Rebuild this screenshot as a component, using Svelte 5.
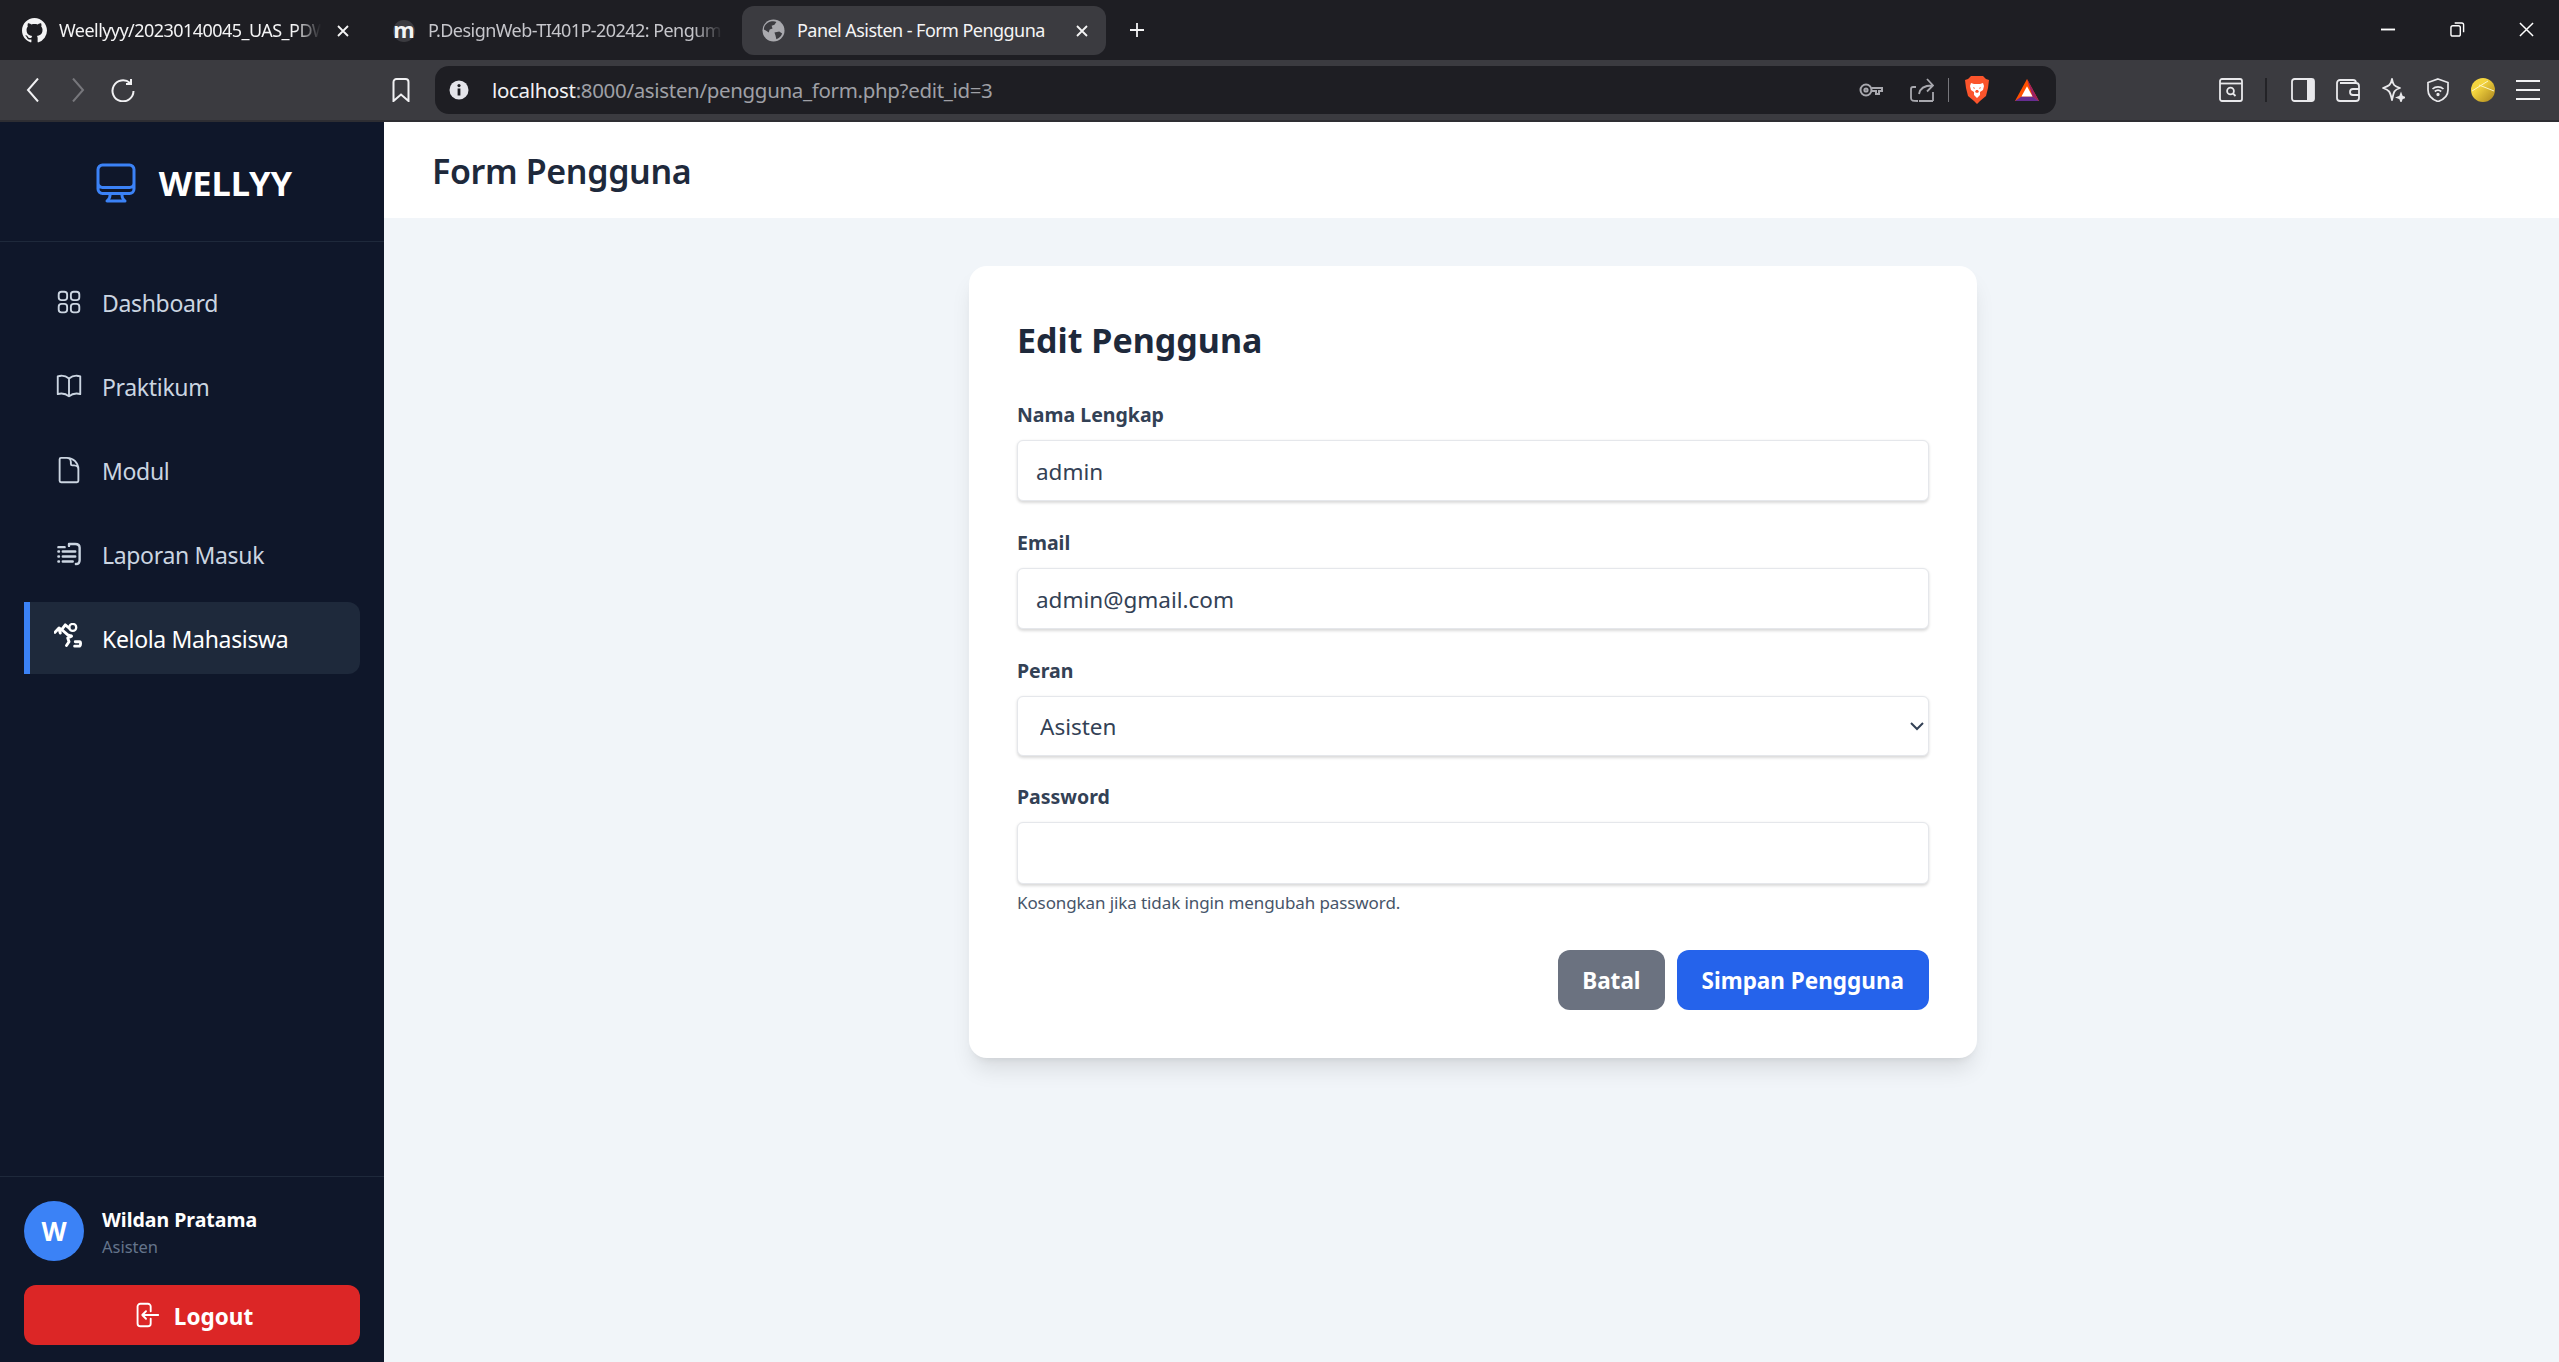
<script>
  const nav = [
    { label: 'Dashboard', icon: 'grid' },
    { label: 'Praktikum', icon: 'book' },
    { label: 'Modul', icon: 'doc' },
    { label: 'Laporan Masuk', icon: 'list' },
    { label: 'Kelola Mahasiswa', icon: 'users', active: true },
  ];
</script>

<div class="page">
  <div class="tabs">
    <div class="tab t1">
      <svg class="fav" viewBox="0 0 16 16" fill="#f4f4f5"><path d="M8 0C3.58 0 0 3.58 0 8c0 3.54 2.29 6.53 5.47 7.59.4.07.55-.17.55-.38 0-.19-.01-.82-.01-1.49-2.01.37-2.53-.49-2.69-.94-.09-.23-.48-.94-.82-1.13-.28-.15-.68-.52-.01-.53.63-.01 1.08.58 1.23.82.72 1.21 1.87.87 2.33.66.07-.52.28-.87.51-1.07-1.78-.2-3.64-.89-3.64-3.95 0-.87.31-1.59.82-2.15-.08-.2-.36-1.02.08-2.12 0 0 .67-.21 2.2.82.64-.18 1.32-.27 2-.27.68 0 1.36.09 2 .27 1.53-1.04 2.2-.82 2.2-.82.44 1.1.16 1.92.08 2.12.51.56.82 1.27.82 2.15 0 3.07-1.87 3.75-3.65 3.95.29.25.54.73.54 1.48 0 1.07-.01 1.93-.01 2.2 0 .21.15.46.55.38A8.013 8.013 0 0016 8c0-4.42-3.58-8-8-8z"/></svg>
      <span class="ttl w1">Weellyyy/20230140045_UAS_PDW</span>
      <svg class="x" viewBox="0 0 12 12" stroke="#f4f4f5" stroke-width="1.8"><path d="M1 1l10 10M11 1L1 11"/></svg>
    </div>
    <div class="tab t2">
      <span class="moodle">m</span>
      <span class="ttl w2 dim">P.DesignWeb-TI401P-20242: Pengum</span>
    </div>
    <div class="tab t3">
      <svg class="fav globe" viewBox="0 0 24 24"><circle cx="12" cy="12" r="11.5" fill="#a9a9ae"/><path d="M6 4c3-2 7-2 9-1l-2 3-3 1 1 3-3 1-1 3-3-2-2-1c0-3 1-5 4-7zM13 14l5-1 3 2c-1 3-3 5-6 6l-1-4z" fill="#3b3b40"/></svg>
      <span class="ttl w3">Panel Asisten - Form Pengguna</span>
      <svg class="x" viewBox="0 0 12 12" stroke="#f4f4f5" stroke-width="1.8"><path d="M1 1l10 10M11 1L1 11"/></svg>
    </div>
    <svg class="plus" viewBox="0 0 16 16" stroke="#f4f4f5" stroke-width="1.8"><path d="M8 1v14M1 8h14"/></svg>
    <div class="win">
      <svg viewBox="0 0 16 16" stroke="#fff" stroke-width="2"><path d="M0 8h15"/></svg>
      <svg viewBox="0 0 16 16" fill="none" stroke="#fff" stroke-width="1.5"><rect x="1" y="4" width="10" height="11" rx="2"/><path d="M5 1h7.5a2 2 0 012 2v8"/></svg>
      <svg viewBox="0 0 16 16" stroke="#fff" stroke-width="1.6"><path d="M1 1l14 14M15 1L1 15"/></svg>
    </div>
  </div>

  <div class="toolbar">
    <svg class="ti back" viewBox="0 0 24 24" fill="none" stroke="#f1f1f3" stroke-width="2"><path d="M17 0.5L7 12l10 11.5"/></svg>
    <svg class="ti fwd" viewBox="0 0 24 24" fill="none" stroke="#77777c" stroke-width="2"><path d="M7 0.5L17 12 7 23.5"/></svg>
    <svg class="ti reload" viewBox="0 0 24 24" fill="none" stroke="#f1f1f3" stroke-width="2"><path d="M19 5A10.500 10.500 0 1 0 22.500 13"/><path d="M20 1v5h-5"/></svg>
    <svg class="ti mark" viewBox="0 0 24 24" fill="none" stroke="#f1f1f3" stroke-width="2"><path d="M4.500 23V4a3 3 0 013-3h9a3 3 0 013 3v19L12 16.500z"/></svg>

    <div class="addr">
      <svg class="ti" viewBox="0 0 24 24"><circle cx="12" cy="12" r="9.500" fill="#e5e5ea"/><rect x="10.600" y="10.500" width="2.800" height="7" fill="#1e1e23"/><circle cx="12" cy="7.600" r="1.600" fill="#1e1e23"/></svg>
      <div class="url"><span>localhost</span>:8000/asisten/pengguna_form.php?edit_id=3</div>
      <svg class="ti key" viewBox="0 0 24 14" fill="none" stroke="#a8a8ae" stroke-width="2"><circle cx="7" cy="7" r="5.500"/><circle cx="7" cy="7" r="1.600"/><path d="M12.500 5H23v3h-3v3h-3V8h-4.500"/></svg>
      <svg class="ti share" viewBox="0 0 24 24" fill="none" stroke="#a8a8ae" stroke-width="1.800"><path d="M8 23c-5 0-7 0-7-3V11c0-1 1-2 2-2h3M23 23H9M23 23v-9M9 16C10 10 14 7.500 22 7.500M17 1l6 6.500-6 6"/></svg>
      <div class="adiv"></div>
      <svg class="ti lion" viewBox="0 0 24 28"><path d="M6 0h12l3 3 3 1-1 8-2 8-6 5-3 3-3-3-6-5-2-8-1-8 3-1z" fill="#fb542b"/><path d="M6 7l3 1h6l3-1 1 3-1 4-3 2v3l-3 3-3-3v-3l-3-2-1-4z" fill="#fff"/><path d="M8 11l2 1-1 1zM16 11l-2 1 1 1zM11 14h2l1 2-2 1-2-1z" fill="#fb542b"/></svg>
      <svg class="ti bat" viewBox="0 0 26 24"><path d="M13 0l13 24H0z" fill="#ff5000"/><path d="M13 0l13 24-7-5z" fill="#9e1f63"/><path d="M0 24l7-5h12l7 5z" fill="#662d91"/><path d="M13 8l6 11H7z" fill="#fff"/></svg>
    </div>

    <div class="tright">
      <svg class="ti" viewBox="0 0 24 24" fill="none" stroke="#e9e9ec" stroke-width="1.800"><rect x="1" y="1" width="22" height="22" rx="2"/><path d="M1 5.500h22"/><circle cx="11.500" cy="13" r="3.400"/><path d="M14 15.500l2.500 2.500"/></svg>
      <div class="sep"></div>
      <svg class="ti" viewBox="0 0 24 24" fill="none" stroke="#e9e9ec" stroke-width="1.800"><rect x="1" y="1" width="22" height="22" rx="2.500"/><path d="M16 1h5a2 2 0 012 2v18a2 2 0 01-2 2h-5z" fill="#e9e9ec" stroke="none"/></svg>
      <svg class="ti" viewBox="0 0 24 24" fill="none" stroke="#e9e9ec" stroke-width="1.800"><path d="M1 5a3 3 0 013-3h13a3 3 0 013 3M1 5v15a3 3 0 003 3h16a3 3 0 003-3V8a3 3 0 00-3-3H4"/><path d="M23 11h-6a3 3 0 000 6h6"/></svg>
      <svg class="ti" viewBox="0 0 24 24" fill="none" stroke="#e9e9ec" stroke-width="1.800"><path d="M11 1c1 6 2 7 8 9-6 2-6 3-8 12C9 13 8 12 2 10 8 8 10 7 11 1z" stroke-linejoin="round"/><path d="M20 16l1 2.500 2.500 1-2.500 1-1 2.500-1-2.500-2.500-1 2.500-1z" fill="#e9e9ec"/></svg>
      <svg class="ti" viewBox="0 0 24 24" fill="none" stroke="#e9e9ec" stroke-width="1.700"><path d="M12 1l10 3.500V12c0 6-4 9.500-10 11.500C6 21.500 2 18 2 12V4.500z"/><path d="M6.500 11a8 8 0 0111 0M8.800 13.500a5 5 0 016.400 0"/><circle cx="12" cy="16.500" r="0.800" fill="#e9e9ec"/></svg>
      <svg class="ti" viewBox="0 0 24 24"><defs><linearGradient id="coin" x1="0" y1="0" x2="1" y2="1"><stop offset="0.350" stop-color="#f4d53f"/><stop offset="1" stop-color="#a8821c"/></linearGradient></defs><circle cx="12" cy="12" r="12" fill="url(#coin)"/><path d="M1 13L17 3M8 7l15 6" stroke="#fdf6c5" stroke-width="1" fill="none"/></svg>
      <svg class="ti" viewBox="0 0 24 24" stroke="#f1f1f3" stroke-width="2"><path d="M0 3h24M0 12h24M0 21h24"/></svg>
    </div>
  </div>

  <div class="app">
    <aside class="sidebar">
      <div class="brand">
        <svg class="logo" viewBox="0 0 24 24" fill="none" stroke="#3b82f6" stroke-width="1.500" stroke-linecap="round" stroke-linejoin="round"><path d="M9 17.250v1.007a3 3 0 01-.879 2.122L7.500 21h9l-.621-.621A3 3 0 0115 18.257V17.250m6-12V15a2.250 2.250 0 01-2.250 2.250H5.250A2.250 2.250 0 013 15V5.250m18 0A2.250 2.250 0 0018.750 3H5.250A2.250 2.250 0 003 5.250m18 0V12a2.250 2.250 0 01-2.250 2.250H5.250A2.250 2.250 0 013 12V5.250"/></svg>
        <span>WELLYY</span>
      </div>
      <nav>
        {#each nav as item}
          <div class="item" class:active={item.active}>
            <svg class="nicon" viewBox="0 0 24 24" fill="none" stroke="currentColor" stroke-width="1.500" stroke-linecap="round" stroke-linejoin="round">
              {#if item.icon === 'grid'}
                <path d="M3.750 6A2.250 2.250 0 016 3.750h2.250A2.250 2.250 0 0110.500 6v2.250a2.250 2.250 0 01-2.250 2.250H6a2.250 2.250 0 01-2.250-2.250V6zM3.750 15.750A2.250 2.250 0 016 13.500h2.250a2.250 2.250 0 012.250 2.250V18a2.250 2.250 0 01-2.250 2.250H6A2.250 2.250 0 013.750 18v-2.250zM13.500 6a2.250 2.250 0 012.250-2.250H18A2.250 2.250 0 0120.250 6v2.250A2.250 2.250 0 0118 10.500h-2.250a2.250 2.250 0 01-2.250-2.250V6zM13.500 15.750a2.250 2.250 0 012.250-2.250H18a2.250 2.250 0 012.250 2.250V18A2.250 2.250 0 0118 20.250h-2.250a2.250 2.250 0 01-2.250-2.250v-2.250z"/>
              {:else if item.icon === 'book'}
                <path d="M12 6.042A8.967 8.967 0 006 3.750c-1.052 0-2.062.18-3 .512v14.250A8.987 8.987 0 016 18c2.305 0 4.408.867 6 2.292m0-14.250a8.966 8.966 0 016-2.292c1.052 0 2.062.18 3 .512v14.250A8.987 8.987 0 0018 18a8.967 8.967 0 00-6 2.292m0-14.250v14.250"/>
              {:else if item.icon === 'doc'}
                <path d="M19.500 14.250v-2.625a3.375 3.375 0 00-3.375-3.375h-1.500A1.125 1.125 0 0113.500 7.125v-1.500a3.375 3.375 0 00-3.375-3.375H8.250m2.250 0H5.625c-.621 0-1.125.504-1.125 1.125v17.250c0 .621.504 1.125 1.125 1.125h12.750c.621 0 1.125-.504 1.125-1.125V11.250a9 9 0 00-9-9z"/>
              {:else if item.icon === 'list'}
                <path d="M3.500 6.500h5M12 5.500V4h5c2 0 3.500 1 3.500 3v10c0 2-1 3-3 3M7 10h10M3.500 10h.5M7 14h10M3.500 14h.5M7 18h8M3.500 18h.5" stroke-width="1.900"/>
              {:else}
                <g stroke-width="2.300">
                  <path d="M.8 7.500L4 4l2 1.500L9 1.500l3 2.500M4 4.500l1 3.500M7 6l4 3.500 3 1M14 10.500l-3 1.500 1 3-2 3M17 15h3.500c1 0 1 3 0 3.500h-4"/>
                  <circle cx="15" cy="3.500" r="2.800" stroke-width="1.800"/>
                </g>
              {/if}
            </svg>
            <span>{item.label}</span>
          </div>
        {/each}
      </nav>
      <div class="foot">
        <div class="user">
          <div class="avatar">W</div>
          <div class="who">
            <div class="name">Wildan Pratama</div>
            <div class="role">Asisten</div>
          </div>
        </div>
        <button class="logout" type="button">
          <svg viewBox="0 0 24 24" fill="none" stroke="currentColor" stroke-width="1.500" stroke-linecap="round" stroke-linejoin="round"><path d="M15.750 9V5.250A2.250 2.250 0 0013.500 3h-6a2.250 2.250 0 00-2.250 2.250v13.500A2.250 2.250 0 007.500 21h6a2.250 2.250 0 002.250-2.250V15M12 9l-3 3m0 0l3 3m-3-3h12.750"/></svg>
          <span>Logout</span>
        </button>
      </div>
    </aside>

    <main>
      <header><h1>Form Pengguna</h1></header>
      <div class="content">
        <form class="card">
          <h2>Edit Pengguna</h2>
          <label for="nama">Nama Lengkap</label>
          <input id="nama" type="text" value="admin" />
          <label for="email">Email</label>
          <input id="email" type="email" value="admin@gmail.com" />
          <label for="peran">Peran</label>
          <div class="selectwrap">
            <select id="peran"><option>Asisten</option><option>Mahasiswa</option></select>
            <svg class="chev" viewBox="0 0 14 9" fill="none" stroke="#334155" stroke-width="2"><path d="M1 1l6 6 6-6"/></svg>
          </div>
          <label for="pw">Password</label>
          <input id="pw" type="password" />
          <p class="hint">Kosongkan jika tidak ingin mengubah password.</p>
          <div class="actions">
            <button class="btn gray" type="button">Batal</button>
            <button class="btn blue" type="button">Simpan Pengguna</button>
          </div>
        </form>
      </div>
    </main>
  </div>
</div>

<style>
  :global(body) { margin: 0; font-family: "Noto Sans", "Open Sans", sans-serif; }
  svg { display: block; flex: none; }
  .page { height: 100vh; display: flex; flex-direction: column; overflow: hidden; background: #2e2e33; }

  .tabs { height: 60px; background: #1e1e23; display: flex; align-items: flex-start; flex: none; color: #f4f4f5; font-size: 18px; }
  .tab { height: 49px; margin-top: 6px; display: flex; align-items: center; border-radius: 12px; box-sizing: border-box; flex: none; }
  .t1 { width: 372px; padding-left: 22px; }
  .t2 { width: 370px; padding-left: 21px; }
  .t3 { width: 364px; padding-left: 20px; background: #3b3b40; }
  .fav { width: 25px; height: 25px; margin-right: 12px; }
  .globe { width: 23px; height: 23px; margin-right: 12px; }
  .ttl { white-space: nowrap; overflow: hidden; letter-spacing: -.55px; padding-bottom: 2px; }
  .w1 { width: 262px; margin-right: 16px; mask-image: linear-gradient(to right, #000 90%, transparent 100%); }
  .w2 { width: 295px; mask-image: linear-gradient(to right, #000 90%, transparent 100%); }
  .w3 { width: 267px; margin-right: 12px; }
  .dim { color: #c6c6cb; }
  .moodle { width: 22px; height: 22px; margin-right: 13px; border-radius: 50%; background: #3b3b40; color: #f4f4f5; font-weight: 700; font-size: 22px; line-height: 18px; text-align: center; flex: none; }
  .x { width: 12px; height: 12px; }
  .plus { width: 16px; height: 16px; margin: 22px 0 0 23px; }
  .win { margin-left: auto; display: flex; gap: 54px; padding: 22px 25px 0 0; }
  .win svg { width: 15px; height: 15px; }

  .toolbar { height: 60px; background: #3b3b40; display: flex; align-items: center; flex: none; }
  .ti { width: 24px; height: 24px; }
  .back { margin-left: 21px; }
  .fwd { margin-left: 21px; }
  .reload { margin-left: 21px; }
  .mark { margin-left: 254px; }
  .addr { width: 1621px; height: 48px; margin-left: 22px; box-sizing: border-box; background: #1e1e23; border-radius: 14px; display: flex; align-items: center; padding: 0 17px 0 12px; flex: none; }
  .url { margin-left: 21px; color: #9fa0a6; font-size: 20.5px; letter-spacing: -.33px; white-space: nowrap; }
  .url span { color: #f1f1f3; }
  .key { margin-left: auto; height: 14px; }
  .share { margin-left: 27px; }
  .adiv { width: 1px; height: 24px; background: #77777c; margin: 0 16px 0 14px; }
  .lion { height: 28px; }
  .bat { margin-left: 26px; }
  .tright { margin-left: auto; display: flex; align-items: center; gap: 21px; padding-right: 19px; }
  .tright > :first-child { margin-right: -2px; }
  .sep { width: 2px; height: 24px; background: #232327; margin: 0 3px; }

  .app { flex: 1; display: flex; min-height: 0; margin-top: 2px; }
  .sidebar { width: 384px; background: #0f172a; display: flex; flex-direction: column; flex: none; }
  .brand { height: 120px; padding-top: 2px; box-sizing: border-box; border-bottom: 1px solid #1e293b; display: flex; align-items: center; justify-content: center; gap: 19px; color: #fff; font-size: 34.500px; font-weight: 700; }
  .logo { width: 48px; height: 48px; }
  nav { flex: 1; padding: 24px 24px; display: flex; flex-direction: column; gap: 12px; }
  .item { height: 72px; display: flex; align-items: center; padding-left: 30px; gap: 18px; color: #cbd5e1; font-size: 23px; letter-spacing: -.33px; border-radius: 0 12px 12px 0; box-sizing: border-box; }
  .item span { padding-top: 1px; }
  .item.active { background: #1e293b; color: #fff; border-left: 6px solid #3b82f6; padding-left: 24px; }
  .nicon { width: 30px; height: 30px; }
  .foot { border-top: 1px solid #1e293b; padding: 24px 24px 17px; }
  .user { display: flex; align-items: center; gap: 18px; margin-bottom: 24px; }
  .avatar { width: 60px; height: 60px; border-radius: 50%; background: #3b82f6; color: #fff; font-weight: 700; font-size: 26px; display: flex; align-items: center; justify-content: center; }
  .who { padding-top: 2px; }
  .name { color: #fff; font-size: 19.500px; font-weight: 700; line-height: 30px; }
  .role { color: #64748b; font-size: 16.500px; line-height: 24px; }
  .logout { width: 100%; height: 60px; border: 0; border-radius: 12px; background: #dc2626; color: #fff; font: 700 22.500px "Noto Sans", sans-serif; display: flex; align-items: center; justify-content: center; gap: 13px; }
  .logout span { padding-top: 2px; }
  .logout svg { width: 30px; height: 30px; }

  main { flex: 1; background: #f1f5f9; min-width: 0; }
  header { height: 96px; box-sizing: border-box; padding: 2px 0 0 48px; background: #fff; display: flex; align-items: center; }
  h1 { margin: 0; font-size: 34px; letter-spacing: -.35px; font-weight: 600; color: #1e293b; }
  .content { padding: 48px 45px 0 48px; display: flex; justify-content: center; }
  .card { width: 1008px; box-sizing: border-box; background: #fff; border-radius: 18px; padding: 48px; box-shadow: 0 15px 22px -4px rgba(0,0,0,.1), 0 6px 9px -6px rgba(0,0,0,.1); display: flex; flex-direction: column; }
  h2 { margin: -1px 0 33px; font-size: 34px; line-height: 54px; font-weight: 700; color: #1e293b; }
  label { font-size: 19.500px; font-weight: 700; line-height: 30px; margin-bottom: 10px; color: #334155; }
  input, select { box-sizing: border-box; width: 100%; height: 61px; margin-bottom: 27px; border: 1.500px solid #e5e7eb; border-radius: 6px; background: #fff; box-shadow: 0 1.500px 3px rgba(0,0,0,.15); padding: 2px 18px 0; font: 22.500px "Noto Sans", sans-serif; color: #334155; }
  .selectwrap { position: relative; }
  select { height: 60px; display: block; margin-bottom: 26px; padding: 0 22px; appearance: none; }
  .chev { position: absolute; right: 5px; top: 26px; width: 14px; height: 9px; }
  #pw { height: 62px; margin-bottom: 5px; }
  .hint { margin: 0 0 34px; font-size: 17px; letter-spacing: -.1px; line-height: 27px; color: #475569; }
  .actions { display: flex; justify-content: flex-end; gap: 12px; }
  .btn { height: 60px; border: 0; border-radius: 12px; padding: 0 25px; color: #fff; font: 700 22.500px "Noto Sans", sans-serif; }
  .gray { background: #6b7280; padding: 0 24px; }
  .blue { background: #2563eb; }
</style>
